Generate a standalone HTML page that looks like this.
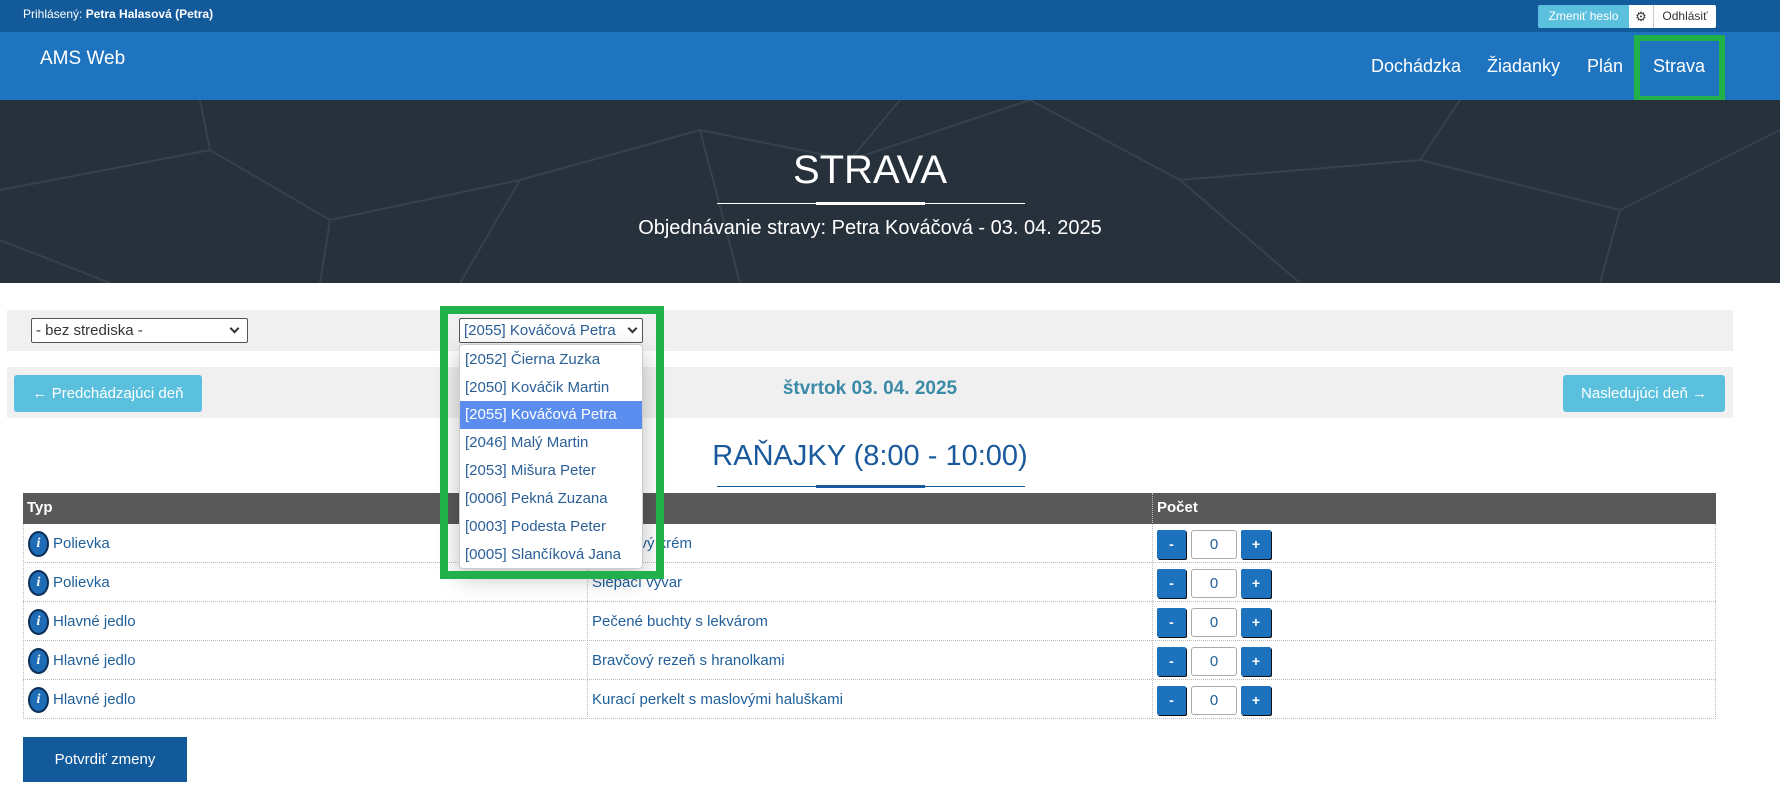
<!DOCTYPE html>
<html><head><meta charset="utf-8"><style>
*{box-sizing:border-box;margin:0;padding:0}
body{width:1780px;height:798px;overflow:hidden;font-family:"Liberation Sans",sans-serif;background:#fff;position:relative;color:#1f5f9a}
.a{position:absolute}
.top{left:0;top:0;width:1780px;height:32px;background:#135a9b;color:#fff;font-size:12px}
.nav{left:0;top:32px;width:1780px;height:68px;background:#1f74c0;color:#fff}
.hero{left:0;top:100px;width:1780px;height:183px;background:#27313c;overflow:hidden}
.btnb{background:#1d72be;color:#fff;font-weight:bold;font-size:14px;text-align:center;line-height:29px;border-radius:2px;box-shadow:1px 1px 0 #111}
.inp{border:1px solid #aaa;border-radius:3px;text-align:center;line-height:28px;font-size:15px;color:#1f5f9a;background:#fff}
.row{left:23px;width:1693px;height:39px;border-bottom:1px dotted #bbb}
.ic{width:21px;height:26px;border-radius:50%;background:#1d6cb5;border:2px solid #0b2e57;color:#fff;font:italic bold 14px "Liberation Serif",serif;text-align:center;line-height:22px}
.opt{left:0;width:182px;height:28px;line-height:28px;padding-left:5px;font-size:15px;color:#2b5f96}
.chev{position:absolute;top:8px;width:7px;height:7px;border-right:2px solid #333;border-bottom:2px solid #333;transform:rotate(45deg)}
</style></head><body>
<div class="a top"><span class="a" style="left:23px;top:7px">Prihlásený: <b>Petra Halasová (Petra)</b></span>
<div class="a" style="left:1538px;top:5px;width:91px;height:23px;background:#5bc0de;border-radius:2px 0 0 2px;font-size:12px;line-height:23px;text-align:center">Zmeniť heslo</div>
<div class="a" style="left:1629px;top:5px;width:24px;height:23px;background:#fff;color:#333;font-size:13px;line-height:23px;text-align:center">⚙</div>
<div class="a" style="left:1653px;top:5px;width:63px;height:23px;background:#fff;color:#333;border-left:1px solid #ccc;font-size:12px;line-height:23px;text-align:center;border-radius:0 2px 2px 0">Odhlásiť</div>
</div>
<div class="a nav">
<span class="a" style="left:40px;top:16px;font-size:19px">AMS Web</span>
<span class="a" style="left:1371px;top:24px;font-size:18px">Dochádzka</span>
<span class="a" style="left:1487px;top:24px;font-size:18px">Žiadanky</span>
<span class="a" style="left:1587px;top:24px;font-size:18px">Plán</span>
<span class="a" style="left:1653px;top:24px;font-size:18px">Strava</span>
<div class="a" style="left:1634px;top:3px;width:91px;height:67px;border:6px solid #22b04b"></div>
</div>
<div class="a hero">
<svg width="1780" height="183" style="position:absolute;left:0;top:0" stroke="#36414d" stroke-width="2" fill="none">
<path d="M0 90 L210 50 L330 120 L520 80 L700 30 L850 60 L1030 0 M210 50 L200 0 M330 120 L320 183 M520 80 L460 183 M700 30 L740 183 M850 60 L900 0 M1030 0 L1180 80 L1300 183 M1180 80 L1420 60 L1620 110 L1780 30 M1420 60 L1460 0 M1620 110 L1600 183 M0 140 L110 183"/>
</svg>
<div class="a" style="left:0;width:1740px;top:48px;text-align:center;color:#fff;font-size:40px">STRAVA</div>
<div class="a" style="left:717px;top:103px;width:308px;height:1px;background:#fff"></div>
<div class="a" style="left:816px;top:102px;width:109px;height:3px;background:#fff"></div>
<div class="a" style="left:0;width:1740px;top:117px;text-align:center;color:#fff;font-size:20px">Objednávanie stravy: Petra Kováčová - 03. 04. 2025</div>
</div>
<div class="a" style="left:7px;top:310px;width:1726px;height:41px;background:#f0f0f0"></div>
<div class="a" style="left:31px;top:318px;width:217px;height:25px;border:1px solid #555;border-radius:2px;background:#fff;font-size:15px;line-height:23px;padding-left:4px;color:#333">- bez strediska -<span class="chev" style="right:9px;top:6px"></span></div>
<div class="a" style="left:7px;top:367px;width:1726px;height:51px;background:#f0f0f0"></div>
<div class="a" style="left:14px;top:375px;width:188px;height:37px;background:#5bc0de;border-radius:3px;color:#fff;font-size:15px;line-height:37px;text-align:center">← Predchádzajúci deň</div>
<div class="a" style="left:1563px;top:375px;width:162px;height:37px;background:#5bc0de;border-radius:3px;color:#fff;font-size:15px;line-height:37px;text-align:center">Nasledujúci deň →</div>
<div class="a" style="left:0;width:1740px;top:378px;text-align:center;font-size:19px;font-weight:bold;color:#3a8aa8">štvrtok 03. 04. 2025</div>
<div class="a" style="left:0;width:1740px;top:440px;text-align:center;font-size:29px;color:#1a5a9c">RAŇAJKY (8:00 - 10:00)</div>
<div class="a" style="left:717px;top:486px;width:308px;height:1px;background:#1a5a9c"></div>
<div class="a" style="left:816px;top:485px;width:109px;height:3px;background:#1a5a9c"></div>
<div class="a" style="left:23px;top:493px;width:1693px;height:31px;background:#595959;color:#fff;font-weight:bold;font-size:15px">
<span class="a" style="left:4px;top:6px">Typ</span><span class="a" style="left:1134px;top:6px">Počet</span></div>
<div class="a" style="left:23px;top:524px;width:1693px;height:195px;border-left:1px dotted #bbb;border-right:1px dotted #bbb"></div>
<div class="a" style="left:587px;top:493px;width:1px;height:226px;border-left:1px dotted #bbb"></div>
<div class="a" style="left:1152px;top:493px;width:1px;height:226px;border-left:1px dotted #bbb"></div>
<div class="a row" style="top:524px"><div class="a ic" style="left:5px;top:7px">i</div><span class="a" style="left:30px;top:11px;font-size:15px">Polievka</span><span class="a" style="left:569px;top:11px;font-size:15px">Hráškový krém</span><div class="a btnb" style="left:1134px;top:6px;width:29px">-</div><div class="a inp" style="left:1168px;top:6px;width:46px;height:29px">0</div><div class="a btnb" style="left:1218px;top:6px;width:30px">+</div></div>
<div class="a row" style="top:563px"><div class="a ic" style="left:5px;top:7px">i</div><span class="a" style="left:30px;top:11px;font-size:15px">Polievka</span><span class="a" style="left:569px;top:11px;font-size:15px">Slepačí vývar</span><div class="a btnb" style="left:1134px;top:6px;width:29px">-</div><div class="a inp" style="left:1168px;top:6px;width:46px;height:29px">0</div><div class="a btnb" style="left:1218px;top:6px;width:30px">+</div></div>
<div class="a row" style="top:602px"><div class="a ic" style="left:5px;top:7px">i</div><span class="a" style="left:30px;top:11px;font-size:15px">Hlavné jedlo</span><span class="a" style="left:569px;top:11px;font-size:15px">Pečené buchty s lekvárom</span><div class="a btnb" style="left:1134px;top:6px;width:29px">-</div><div class="a inp" style="left:1168px;top:6px;width:46px;height:29px">0</div><div class="a btnb" style="left:1218px;top:6px;width:30px">+</div></div>
<div class="a row" style="top:641px"><div class="a ic" style="left:5px;top:7px">i</div><span class="a" style="left:30px;top:11px;font-size:15px">Hlavné jedlo</span><span class="a" style="left:569px;top:11px;font-size:15px">Bravčový rezeň s hranolkami</span><div class="a btnb" style="left:1134px;top:6px;width:29px">-</div><div class="a inp" style="left:1168px;top:6px;width:46px;height:29px">0</div><div class="a btnb" style="left:1218px;top:6px;width:30px">+</div></div>
<div class="a row" style="top:680px"><div class="a ic" style="left:5px;top:7px">i</div><span class="a" style="left:30px;top:11px;font-size:15px">Hlavné jedlo</span><span class="a" style="left:569px;top:11px;font-size:15px">Kurací perkelt s maslovými haluškami</span><div class="a btnb" style="left:1134px;top:6px;width:29px">-</div><div class="a inp" style="left:1168px;top:6px;width:46px;height:29px">0</div><div class="a btnb" style="left:1218px;top:6px;width:30px">+</div></div>
<div class="a" style="left:23px;top:737px;width:164px;height:45px;background:#135a9b;color:#fff;font-size:15px;line-height:45px;text-align:center">Potvrdiť zmeny</div>
<div class="a" style="left:459px;top:318px;width:184px;height:25px;border:1px solid #555;border-radius:2px;background:#fff;font-size:15px;line-height:23px;padding-left:4px;color:#2b5f96">[2055] Kováčová Petra<span class="chev" style="right:6px;top:6px"></span></div>
<div class="a" style="left:459px;top:344px;width:184px;height:225px;background:#fff;border:1px solid #ccc;border-radius:4px;box-shadow:0 8px 24px rgba(0,0,0,.25);overflow:hidden">
<div class="a opt" style="top:1px">[2052] Čierna Zuzka</div>
<div class="a opt" style="top:29px">[2050] Kováčik Martin</div>
<div class="a opt" style="top:56px;background:#5b8def;color:#fff">[2055] Kováčová Petra</div>
<div class="a opt" style="top:84px">[2046] Malý Martin</div>
<div class="a opt" style="top:112px">[2053] Mišura Peter</div>
<div class="a opt" style="top:140px">[0006] Pekná Zuzana</div>
<div class="a opt" style="top:168px">[0003] Podesta Peter</div>
<div class="a opt" style="top:196px">[0005] Slančíková Jana</div>
</div>
<div class="a" style="left:440px;top:306px;width:224px;height:273px;border:8px solid #22b04b"></div>
</body></html>
